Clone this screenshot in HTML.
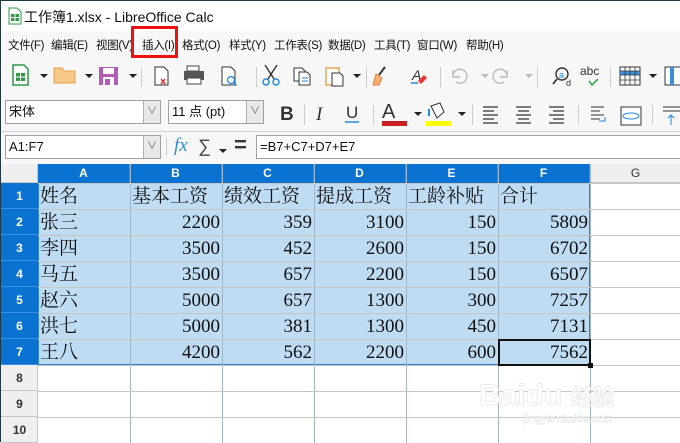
<!DOCTYPE html>
<html><head><meta charset="utf-8"><style>
*{margin:0;padding:0;box-sizing:border-box}
body{width:680px;height:442px;overflow:hidden;background:#f7f7f7;font-family:"Liberation Sans","Noto Sans CJK SC",sans-serif;position:relative;border-left:1px solid #1f3a44;border-top:1px solid #1f3a44}
.a{position:absolute}
.menu span{position:absolute;top:36px;font-size:11.5px;letter-spacing:-0.3px;color:#111;white-space:nowrap}
.box{position:absolute;background:#fff;border:1px solid #a0a0a0;font-size:13px;padding-left:3px;line-height:22px;color:#111}
.dd{position:absolute;right:0;top:0;width:17px;height:100%;background:#e8e8e8;border-left:1px solid #b0b0b0;color:#666;font-size:10px;text-align:center;line-height:22px}
.tri{position:absolute;width:0;height:0;border-left:4px solid transparent;border-right:4px solid transparent;border-top:4px solid #222}
.c{position:absolute;font-family:"Liberation Serif","Noto Serif CJK SC",serif;font-size:19px;color:#111;line-height:26px;white-space:nowrap}
.r{text-align:right}
.lines{position:absolute;background:#c6c6c6}
</style></head><body>
<div class="a" style="left:0;top:0;width:680px;height:30px;background:#fff"></div>
<svg class="a" style="left:7px;top:6px" width="14" height="18"><path d="M1 1h8l4 4v12H1z" fill="#fff" stroke="#2e9a45"/><rect x="3" y="7" width="8" height="7" fill="#2e9a45"/><path d="M3 10.5h8M7 7v7" stroke="#fff"/></svg>
<div class="a" style="left:23px;top:6px;font-size:14px;color:#111">工作簿1.xlsx - LibreOffice Calc</div>
<div class="menu">
<span style="left:7px">文件(F)</span><span style="left:50px">编辑(E)</span><span style="left:95px">视图(V)</span><span style="left:141px">插入(I)</span><span style="left:181px">格式(O)</span><span style="left:228px">样式(Y)</span><span style="left:273px">工作表(S)</span><span style="left:327px">数据(D)</span><span style="left:373px">工具(T)</span><span style="left:416px">窗口(W)</span><span style="left:465px">帮助(H)</span>
</div>
<div class="a" style="left:130px;top:25px;width:47px;height:32px;border:3px solid #ee1111"></div>
<svg class="a" style="left:0;top:58px" width="680" height="32">
<path d="M12 6h11l4 4v16H12z" fill="#fff" stroke="#2e9a45" stroke-width="1.5"/><rect x="15" y="14" width="9" height="8" fill="#2e9a45"/><path d="M15 18h9M19.5 14v8" stroke="#fff"/>
<path d="M53 9h8l2 3h11v12H53z" fill="#f5c98a" stroke="#e8a04a"/>
<rect x="98" y="8" width="19" height="18" fill="#b45cb8"/><rect x="102" y="9" width="11" height="6" fill="#fff"/><rect x="102" y="18" width="11" height="8" fill="#fff"/><rect x="104" y="20" width="5" height="6" fill="#b45cb8"/>
<path d="M154 8h9l4 4v14h-13z" fill="#fff" stroke="#333"/><path d="M160 20l4 5M160 25l4-5" stroke="#e33" stroke-width="1.5"/>
<rect x="186" y="7" width="12" height="5" fill="#fff" stroke="#444"/><rect x="183" y="12" width="20" height="9" fill="#555"/><rect x="186" y="19" width="14" height="6" fill="#fff" stroke="#444"/>
<path d="M221 8h9l4 4v14h-13z" fill="#fff" stroke="#333"/><circle cx="230" cy="21" r="3.5" fill="none" stroke="#1e88e5" stroke-width="1.3"/><path d="M232.5 23.5l3 3" stroke="#1e88e5" stroke-width="1.5"/>
<path d="M264 6l9 14M276 6l-9 14" stroke="#333" stroke-width="1.4"/><circle cx="265" cy="23" r="3" fill="none" stroke="#1e88e5" stroke-width="1.4"/><circle cx="275" cy="23" r="3" fill="none" stroke="#1e88e5" stroke-width="1.4"/>
<path d="M293 9h8l3 3v10h-11z" fill="#fff" stroke="#333"/><path d="M298 13h8l3 3v10h-11z" fill="#fff" stroke="#333"/><path d="M301 19h6M301 22h6" stroke="#1e88e5"/>
<rect x="325" y="9" width="13" height="17" fill="#fff" stroke="#e8a04a" stroke-width="1.4"/><path d="M331 14h8l3 3v10h-11z" fill="#fff" stroke="#333"/>
<path d="M384 8l-6 8" stroke="#333" stroke-width="2"/><path d="M375 15l6 4-3 7h-6z" fill="#f5b26b" stroke="#e8804a"/>
<text x="411" y="21" font-size="14" font-style="italic" font-family="Liberation Sans" fill="#333">A</text><path d="M410 24h7" stroke="#1e88e5" stroke-width="1.5"/><path d="M417 22l6-6 3 3-6 6z" fill="#e33"/>
<path d="M452 18a7 7 0 1 1 3 5M452 11v7h7" fill="none" stroke="#bbb" stroke-width="1.4"/>
<path d="M506 18a7 7 0 1 0-3 5M506 11v7h-7" fill="none" stroke="#bbb" stroke-width="1.4"/>
<circle cx="561" cy="15" r="6" fill="none" stroke="#333" stroke-width="1.4"/><path d="M556 20l-4 5" stroke="#333" stroke-width="1.8"/><text x="558" y="19" font-size="9" fill="#1e88e5" font-family="Liberation Sans">a</text><text x="565" y="27" font-size="9" fill="#333" font-family="Liberation Sans">d</text>
<text x="579" y="16" font-size="12" fill="#333" font-family="Liberation Sans">abc</text><path d="M588 22l3 4 6-6" fill="none" stroke="#3caa4c" stroke-width="1.6"/>
<rect x="619" y="8" width="20" height="18" fill="#fff" stroke="#333"/><rect x="619" y="12" width="20" height="4" fill="#3b8fd9"/><path d="M619 12h20M619 16h20M619 21h20M624 8v18M629 8v18M634 8v18" stroke="#333" stroke-width=".8"/>
<rect x="664" y="8" width="16" height="18" fill="#fff" stroke="#333"/><rect x="669" y="8" width="4" height="18" fill="#3b8fd9"/>
<rect x="140" y="8" width="1" height="20" fill="#ccc"/><rect x="255" y="8" width="1" height="20" fill="#ccc"/><rect x="365" y="8" width="1" height="20" fill="#ccc"/><rect x="439" y="8" width="1" height="20" fill="#ccc"/><rect x="536" y="8" width="1" height="20" fill="#ccc"/><rect x="609" y="8" width="1" height="20" fill="#ccc"/>
</svg>
<div class="tri" style="left:39px;top:73px"></div><div class="tri" style="left:84px;top:73px"></div><div class="tri" style="left:128px;top:73px"></div><div class="tri" style="left:352px;top:73px"></div><div class="tri" style="left:648px;top:73px"></div>
<div class="tri" style="left:480px;top:73px;border-top-color:#bbb"></div><div class="tri" style="left:524px;top:73px;border-top-color:#bbb"></div>
<div class="box" style="left:4px;top:99px;width:156px;height:24px">宋体<div class="dd">∨</div></div>
<div class="box" style="left:167px;top:99px;width:96px;height:24px">11 点 (pt)<div class="dd">∨</div></div>
<svg class="a" style="left:270px;top:96px" width="410" height="32">
<text x="9" y="23" font-size="19" font-weight="bold" font-family="Liberation Sans" fill="#333">B</text>
<text x="45" y="23" font-size="19" font-style="italic" font-family="Liberation Serif" fill="#333">I</text>
<text x="75" y="21" font-size="17" font-family="Liberation Sans" fill="#333">U</text><path d="M74 25h14" stroke="#1e88e5" stroke-width="1.5"/>
<text x="111" y="21" font-size="20" font-family="Liberation Sans" fill="#333">A</text><rect x="111" y="24" width="25" height="5" fill="#c62020"/>
<rect x="155" y="24" width="25" height="5" fill="#ffff00"/><path d="M160 9l9 -3 4 9-7 6z" fill="#fff" stroke="#333"/><path d="M158 12v7" stroke="#1e88e5" stroke-width="2"/>
<path d="M212 10h15M212 14h11M212 18h15M212 22h11M212 26h15" stroke="#333" stroke-width="1.2"/>
<path d="M245 10h15M247 14h11M245 18h15M247 22h11M245 26h15" stroke="#333" stroke-width="1.2"/>
<path d="M278 10h15M282 14h11M278 18h15M282 22h11M278 26h15" stroke="#333" stroke-width="1.2"/>
<path d="M320 10h13M320 14h9M320 18h13M320 22h9" stroke="#333"/><path d="M328 24h6v-4" fill="none" stroke="#1e88e5"/>
<rect x="350" y="10" width="20" height="18" fill="#fff" stroke="#333"/><ellipse cx="360" cy="19" rx="8" ry="3" fill="none" stroke="#1e88e5"/>
<path d="M392 10h18M392 14h18" stroke="#333"/><path d="M400 28v-10M397 21l3-3 3 3" fill="none" stroke="#1e88e5"/>
<rect x="33" y="8" width="1" height="20" fill="#ccc"/><rect x="102" y="8" width="1" height="20" fill="#ccc"/><rect x="201" y="8" width="1" height="20" fill="#ccc"/><rect x="307" y="8" width="1" height="20" fill="#ccc"/><rect x="381" y="8" width="1" height="20" fill="#ccc"/>
</svg>
<div class="tri" style="left:413px;top:111px"></div><div class="tri" style="left:457px;top:111px"></div>
<div class="a" style="left:0;top:130px;width:680px;height:1px;background:#d0d0d0"></div>
<div class="box" style="left:4px;top:134px;width:156px;height:24px">A1:F7<div class="dd">∨</div></div>
<div class="a" style="left:165px;top:137px;width:1px;height:18px;background:#ccc"></div>
<div class="a" style="left:173px;top:134px;font-family:'Liberation Serif',serif;font-style:italic;font-size:19px;color:#2b8fd6">fx</div>
<div class="a" style="left:197px;top:135px;font-size:18px;color:#444">∑</div>
<div class="tri" style="left:218px;top:148px"></div>
<div class="a" style="left:233px;top:131px;font-size:22px;font-weight:bold;color:#333">=</div>
<div class="box" style="left:255px;top:134px;width:430px;height:24px">=B7+C7+D7+E7</div>
<div class="a" style="left:0;top:163px;width:680px;height:279px;background:#fff"></div>
<div class="a" style="left:0;top:163px;width:37px;height:19px;background:#efefef;border-right:1px solid #c6c6c6;border-bottom:1px solid #c6c6c6"></div>
<div class="a" style="left:37px;top:163px;width:552px;height:19px;background:#0a72d1"></div>
<div class="a" style="left:589px;top:163px;width:91px;height:19px;background:#efefef;border-bottom:1px solid #c6c6c6;font-size:12px;text-align:center;line-height:19px;color:#333">G</div>
<div class="a" style="left:0;top:182px;width:37px;height:182px;background:#0a72d1"></div>
<div class="a" style="left:0;top:364px;width:37px;height:78px;background:#efefef;border-right:1px solid #c6c6c6"></div>
<div class="a" style="left:37px;top:182px;width:552px;height:182px;background:#bfdcf3;border:1px solid #2b7fd0"></div>
<div id="g"></div>
<div class="a" style="left:497px;top:338px;width:93px;height:27px;border:2px solid #111"></div>
<div class="a" style="left:587px;top:362px;width:5px;height:5px;background:#111"></div>
<div class="a" style="left:478px;top:378px;font-size:30px;font-weight:bold;color:#fff;-webkit-text-stroke:1px #ececec">Baidu <span style="font-size:22px">经验</span></div>
<div class="a" style="left:523px;top:412px;font-size:11px;color:#fff;-webkit-text-stroke:.5px #e4e4e4">jingyan.baidu.com</div>
<script>
var g=document.getElementById('g'),h='';
var cx=[37,129,221,313,405,497,589];
for(var i=1;i<7;i++)h+='<div class="lines" style="left:'+cx[i]+'px;top:163px;width:1px;height:279px;background:#9fb7cc"></div>';
for(var r=0;r<10;r++){var y=182+r*26;h+='<div class="lines" style="left:37px;top:'+y+'px;width:643px;height:1px"></div>';
h+='<div class="a" style="left:0;top:'+y+'px;width:37px;height:26px;text-align:center;line-height:26px;font-size:12px;font-weight:bold;color:'+(r<7?'#fff':'#333')+';border-bottom:1px solid '+(r<7?'#3b8ee0':'#c6c6c6')+'">'+(r+1)+'</div>';}
'ABCDEF'.split('').forEach(function(l,i){h+='<div class="a" style="left:'+cx[i]+'px;top:163px;width:92px;height:19px;text-align:center;line-height:19px;font-size:12px;font-weight:bold;color:#fff;border-right:1px solid #3b8ee0">'+l+'</div>';});
var d=[["姓名","基本工资","绩效工资","提成工资","工龄补贴","合计"],["张三",2200,359,3100,150,5809],["李四",3500,452,2600,150,6702],["马五",3500,657,2200,150,6507],["赵六",5000,657,1300,300,7257],["洪七",5000,381,1300,450,7131],["王八",4200,562,2200,600,7562]];
d.forEach(function(row,ri){row.forEach(function(v,ci){var y=182+ri*26+1;var num=typeof v=='number';
h+='<div class="c'+(num?' r':'')+'" style="left:'+(cx[ci]+2)+'px;top:'+y+'px;width:88px">'+v+'</div>';});});
g.innerHTML=h;
</script>
</body></html>
